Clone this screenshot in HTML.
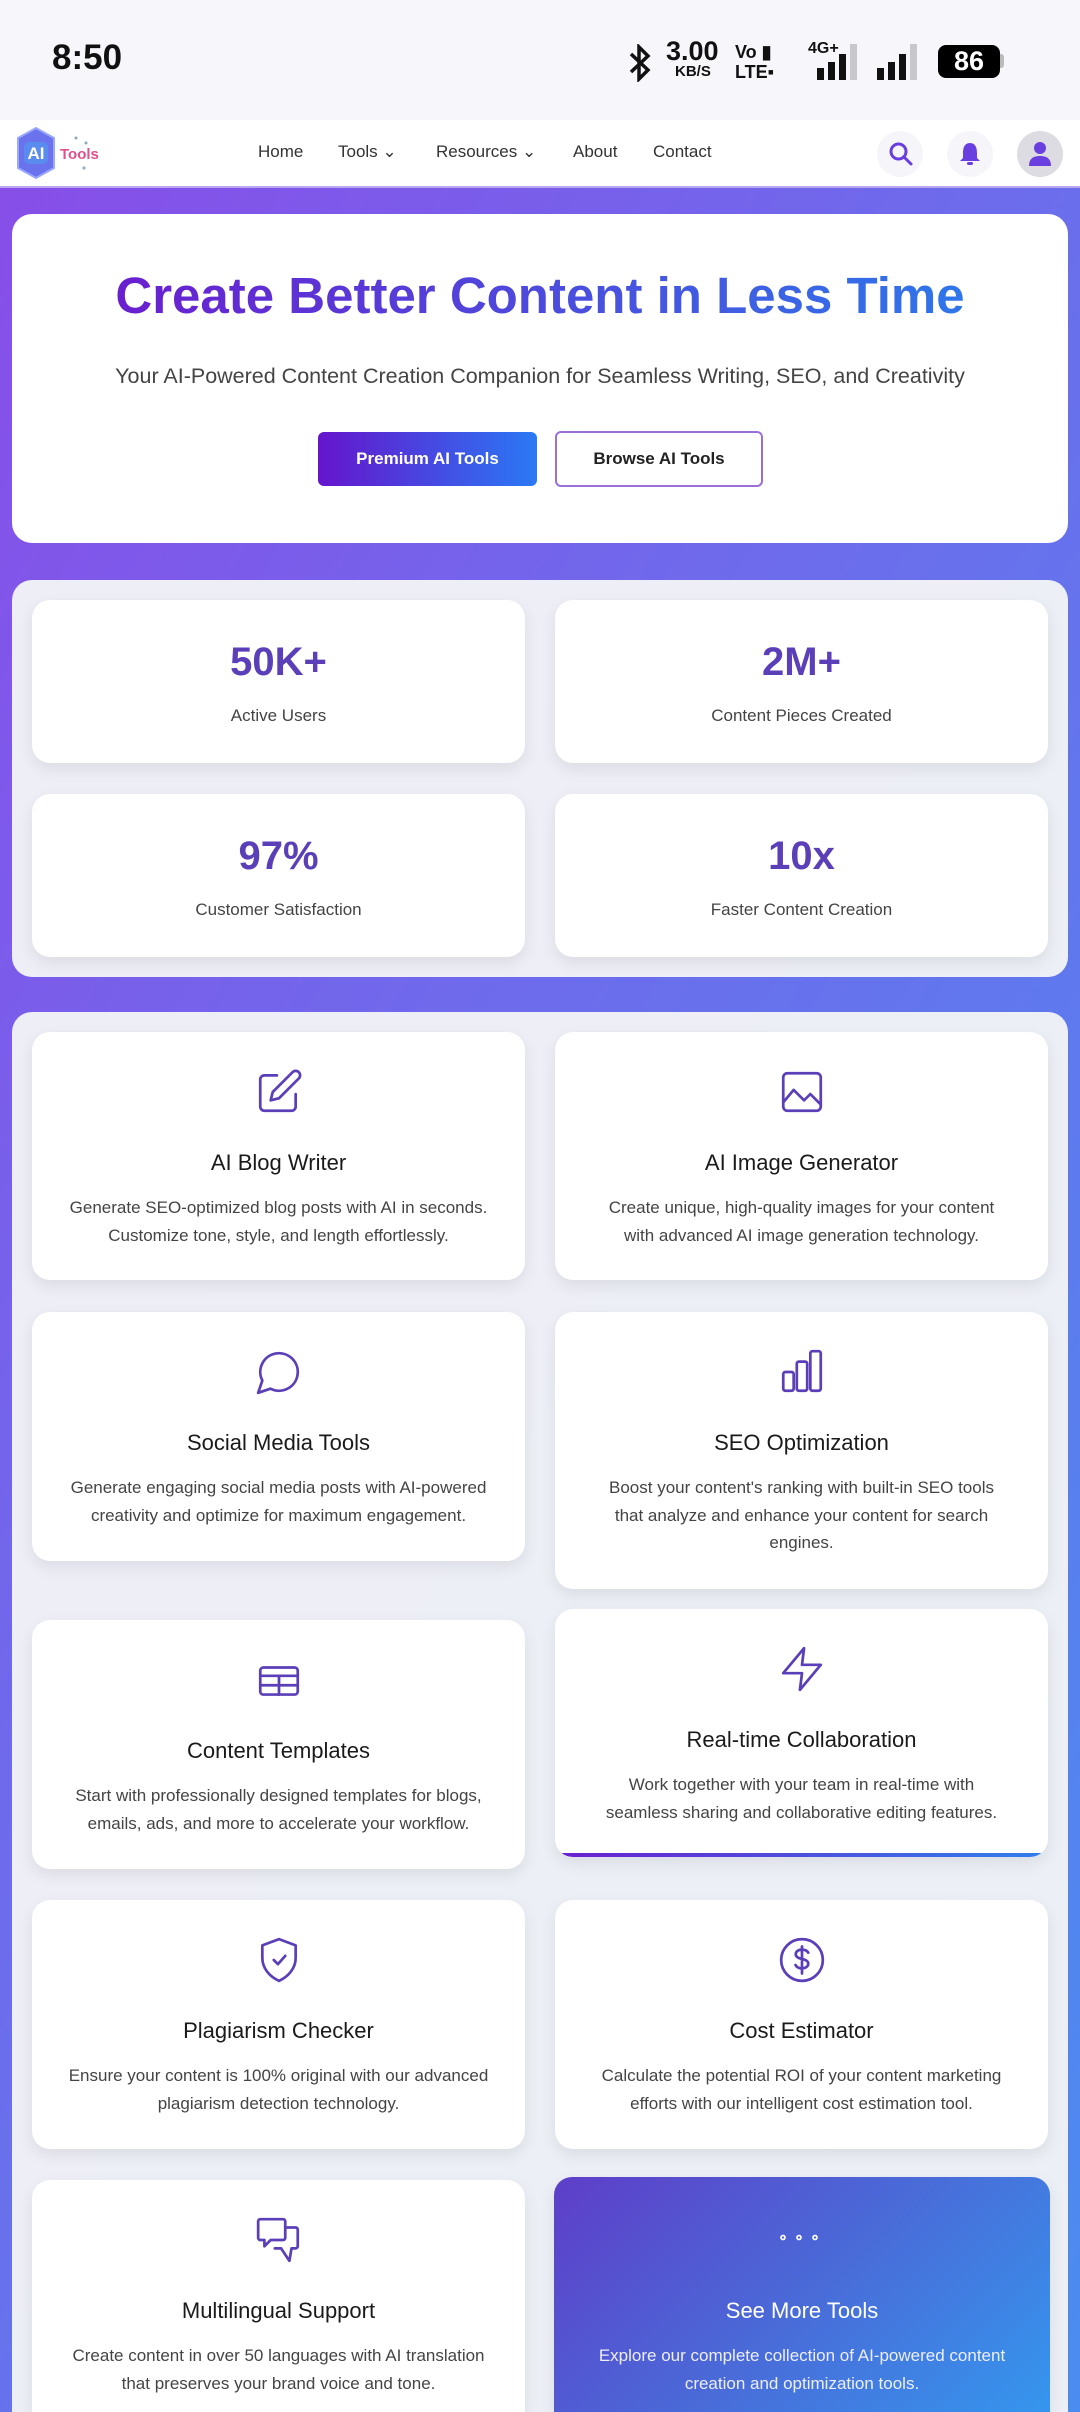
<!DOCTYPE html>
<html style="width:1080px;height:2412px;overflow:hidden"><head><meta charset="utf-8"><style>
*{box-sizing:border-box;margin:0;padding:0}
body{width:1080px;height:2412px;overflow:hidden;position:relative;font-family:"Liberation Sans",sans-serif;background:linear-gradient(120deg,#8a4be8 0%,#6d6cec 45%,#4b8cf0 100%)}
.abs{position:absolute}
.sb{left:0;top:0;width:1080px;height:120px;background:#f7f7fb}
.nav{left:0;top:120px;width:1080px;height:68px;background:#fff;border-bottom:2px solid #b9a6f0}
.nav .m{position:absolute;top:22px;font-size:17px;color:#333}
.circ{position:absolute;width:46px;height:46px;border-radius:50%;background:#f6f6fa;top:131px}
.panel{background:rgba(242,243,246,.97);border-radius:20px}
.card{position:absolute;background:#fff;border-radius:18px;box-shadow:0 6px 16px rgba(0,0,0,.08);text-align:center}
.sc .n{position:absolute;left:0;right:0;top:40px;font-size:40px;font-weight:bold;color:#5b3fb8}
.sc .l{position:absolute;left:0;right:0;top:106px;font-size:17px;color:#444}
.tc svg{position:absolute;left:222px;top:35px}
.tc .t{position:absolute;left:0;right:0;top:116px;font-size:22px;color:#1a1a1a;line-height:30px}
.tc .d{position:absolute;left:8px;right:8px;top:162px;font-size:17px;color:#444;line-height:27.5px;white-space:nowrap}
</style></head><body>
<div class="abs sb"></div>
<div class="abs" style="left:52px;top:38px;font-size:35px;font-weight:bold;color:#111">8:50</div>
<svg class="abs" style="left:628px;top:44px" width="24" height="38" viewBox="0 0 24 38"><path d="M3 10 L20 26 L11 35 V3 L20 12 L3 28" fill="none" stroke="#111" stroke-width="3.5"/></svg>
<div class="abs" style="left:666px;top:38px;font-size:27px;font-weight:bold;color:#111;line-height:26px">3.00</div>
<div class="abs" style="left:675px;top:63px;font-size:15px;font-weight:bold;color:#111">KB/S</div>
<div class="abs" style="left:735px;top:42px;font-size:18px;font-weight:bold;color:#111;line-height:20px">Vo ▮<br>LTE▪</div>
<div class="abs" style="left:808px;top:40px;font-size:16px;font-weight:bold;color:#111">4G+</div>
<svg class="abs" style="left:815px;top:44px" width="110" height="36"><rect x="2" y="24" width="7" height="12" fill="#111"/><rect x="13" y="18" width="7" height="18" fill="#111"/><rect x="24" y="10" width="7" height="26" fill="#111"/><rect x="35" y="0" width="7" height="36" fill="#c8c8cc"/><rect x="62" y="24" width="7" height="12" fill="#111"/><rect x="73" y="18" width="7" height="18" fill="#111"/><rect x="84" y="10" width="7" height="26" fill="#111"/><rect x="95" y="0" width="7" height="36" fill="#c8c8cc"/></svg>
<div class="abs" style="left:938px;top:45px;width:62px;height:33px;background:#000;border-radius:8px;color:#fff;font-size:27px;font-weight:bold;text-align:center;line-height:33px">86</div>
<div class="abs" style="left:1000px;top:54px;width:4px;height:14px;background:#bbb;border-radius:0 3px 3px 0"></div>

<div class="abs nav">
<svg style="position:absolute;left:14px;top:6px" width="86" height="56" viewBox="0 0 86 56"><polygon points="22,2 40,12 40,42 22,52 4,42 4,12" fill="#6a72ee" stroke="#9aa8ff" stroke-width="2"/><rect x="10" y="16" width="24" height="22" rx="5" fill="#5a8cf0"/><text x="22" y="33" font-size="17" font-weight="bold" fill="#fff" text-anchor="middle" font-family="Liberation Sans">AI</text><text x="46" y="33" font-size="15" font-weight="bold" fill="#e0508c" font-family="Liberation Sans">Tools</text><circle cx="62" cy="12" r="1.5" fill="#8ab"/><circle cx="72" cy="17" r="1.5" fill="#8ab"/><circle cx="70" cy="42" r="1.5" fill="#8ab"/></svg>
<div class="m" style="left:258px">Home</div>
<div class="m" style="left:338px">Tools ⌄</div>
<div class="m" style="left:436px">Resources ⌄</div>
<div class="m" style="left:573px">About</div>
<div class="m" style="left:653px">Contact</div>
</div>
<div class="circ" style="left:877px"></div>
<svg class="abs" style="left:888px;top:141px" width="26" height="26" viewBox="0 0 26 26"><circle cx="10.5" cy="10.5" r="7.5" fill="none" stroke="#6a3fe0" stroke-width="3"/><path d="M16 16 L23 23" stroke="#6a3fe0" stroke-width="3" stroke-linecap="round"/></svg>
<div class="circ" style="left:947px"></div>
<svg class="abs" style="left:958px;top:141px" width="24" height="26" viewBox="0 0 24 26"><path d="M12 2 C6 2 5 8 5 12 V17 L2 20 H22 L19 17 V12 C19 8 18 2 12 2Z" fill="#6a3fe0"/><rect x="9" y="21" width="6" height="3" rx="1.5" fill="#6a3fe0"/></svg>
<div class="circ" style="left:1017px;background:#dcdce2"></div>
<svg class="abs" style="left:1028px;top:140px" width="24" height="28" viewBox="0 0 24 28"><circle cx="12" cy="8" r="6" fill="#6a3fe0"/><path d="M1 26 C1 18 6 16 12 16 C18 16 23 18 23 26Z" fill="#6a3fe0"/></svg>

<div class="abs" style="left:12px;top:214px;width:1056px;height:329px;background:#fff;border-radius:20px"></div>
<div class="abs" style="left:0;width:1080px;top:266px;text-align:center;font-size:51px;font-weight:bold"><span style="background:linear-gradient(90deg,#6a1fcf,#2f76ea);-webkit-background-clip:text;background-clip:text;color:transparent;padding:0 4px">Create Better Content in Less Time</span></div>
<div class="abs" style="left:0;width:1080px;top:364px;text-align:center;font-size:21.5px;color:#444">Your AI-Powered Content Creation Companion for Seamless Writing, SEO, and Creativity</div>
<div class="abs" style="left:318px;top:432px;width:219px;height:54px;border-radius:6px;background:linear-gradient(90deg,#6515cc,#2a79f5);color:#fff;font-size:17px;font-weight:bold;text-align:center;line-height:54px">Premium AI Tools</div>
<div class="abs" style="left:555px;top:431px;width:208px;height:56px;border-radius:6px;border:2px solid #9b6fd8;background:#fff;color:#222;font-size:17px;font-weight:bold;text-align:center;line-height:52px">Browse AI Tools</div>

<div class="abs panel" style="left:12px;top:580px;width:1056px;height:397px"></div>
<div class="card sc" style="left:32px;top:600px;width:493px;height:163px"><div class="n">50K+</div><div class="l">Active Users</div></div>
<div class="card sc" style="left:555px;top:600px;width:493px;height:163px"><div class="n">2M+</div><div class="l">Content Pieces Created</div></div>
<div class="card sc" style="left:32px;top:794px;width:493px;height:163px"><div class="n">97%</div><div class="l">Customer Satisfaction</div></div>
<div class="card sc" style="left:555px;top:794px;width:493px;height:163px"><div class="n">10x</div><div class="l">Faster Content Creation</div></div>

<div class="abs panel" style="left:12px;top:1012px;width:1056px;height:1400px;border-radius:20px 20px 0 0"></div>

<div class="card tc" style="left:32px;top:1032px;width:493px;height:248px"><svg width="50" height="50" viewBox="0 0 24 24" fill="none" stroke="#5b3fb8" stroke-width="1.3" stroke-linecap="round" stroke-linejoin="round"><path d="M11 4H5a2 2 0 0 0-2 2v13a2 2 0 0 0 2 2h13a2 2 0 0 0 2-2v-6"/><path d="M18.5 2.5a2.1 2.1 0 0 1 3 3L12 15l-4 1 1-4z"/></svg><div class="t">AI Blog Writer</div><div class="d">Generate SEO-optimized blog posts with AI in seconds.<br>Customize tone, style, and length effortlessly.</div></div>
<div class="card tc" style="left:555px;top:1032px;width:493px;height:248px"><svg width="50" height="50" viewBox="0 0 24 24" fill="none" stroke="#5b3fb8" stroke-width="1.3" stroke-linecap="round" stroke-linejoin="round"><rect x="3" y="3" width="18" height="18" rx="2"/><path d="M3 17l5-6 5 5 3-3 5 5"/></svg><div class="t">AI Image Generator</div><div class="d">Create unique, high-quality images for your content<br>with advanced AI image generation technology.</div></div>

<div class="card tc" style="left:32px;top:1312px;width:493px;height:249px"><svg width="50" height="50" viewBox="0 0 24 24" fill="none" stroke="#5b3fb8" stroke-width="1.3" stroke-linecap="round" stroke-linejoin="round"><path d="M7.9 20A9 9 0 1 0 4 16.1L2 22Z"/></svg><div class="t">Social Media Tools</div><div class="d">Generate engaging social media posts with AI-powered<br>creativity and optimize for maximum engagement.</div></div>
<div class="card tc" style="left:555px;top:1312px;width:493px;height:277px"><svg width="50" height="50" viewBox="0 0 24 24" fill="none" stroke="#5b3fb8" stroke-width="1.3" stroke-linecap="round" stroke-linejoin="round"><rect x="3" y="12" width="5" height="9" rx="1"/><rect x="9.5" y="7" width="5" height="14" rx="1"/><rect x="16" y="2" width="5" height="19" rx="1"/></svg><div class="t">SEO Optimization</div><div class="d">Boost your content's ranking with built-in SEO tools<br>that analyze and enhance your content for search<br>engines.</div></div>

<div class="card tc" style="left:32px;top:1620px;width:493px;height:249px"><svg width="50" height="50" viewBox="0 0 24 24" fill="none" stroke="#5b3fb8" stroke-width="1.3" stroke-linecap="round" stroke-linejoin="round"><rect x="3" y="6" width="18" height="13" rx="1.5"/><path d="M3 10h18M3 14.5h18M12 10v9"/></svg><div class="t">Content Templates</div><div class="d">Start with professionally designed templates for blogs,<br>emails, ads, and more to accelerate your workflow.</div></div>
<div class="card tc" style="left:555px;top:1609px;width:493px;height:248px;overflow:hidden"><svg width="50" height="50" viewBox="0 0 24 24" fill="none" stroke="#5b3fb8" stroke-width="1.3" stroke-linecap="round" stroke-linejoin="round"><path d="M13 2 3 14h9l-1 8 10-12h-9z"/></svg><div class="t">Real-time Collaboration</div><div class="d">Work together with your team in real-time with<br>seamless sharing and collaborative editing features.</div><div style="position:absolute;left:0;right:0;bottom:0;height:4px;background:linear-gradient(90deg,#6a1fcf,#2f80ee)"></div></div>

<div class="card tc" style="left:32px;top:1900px;width:493px;height:249px"><svg width="50" height="50" viewBox="0 0 24 24" fill="none" stroke="#5b3fb8" stroke-width="1.3" stroke-linecap="round" stroke-linejoin="round"><path d="M12 2l8 3v6c0 5-3.5 9-8 11-4.5-2-8-6-8-11V5z"/><path d="M9.5 12l2 2 3.5-4"/></svg><div class="t">Plagiarism Checker</div><div class="d">Ensure your content is 100% original with our advanced<br>plagiarism detection technology.</div></div>
<div class="card tc" style="left:555px;top:1900px;width:493px;height:249px"><svg width="50" height="50" viewBox="0 0 24 24" fill="none" stroke="#5b3fb8" stroke-width="1.3" stroke-linecap="round" stroke-linejoin="round"><circle cx="12" cy="12" r="10"/><path d="M15 8.5c-.5-1-1.6-1.5-3-1.5-1.7 0-3 .9-3 2.2 0 3 6 1.6 6 4.6 0 1.3-1.3 2.2-3 2.2-1.5 0-2.6-.6-3.1-1.6M12 5.5v13"/></svg><div class="t">Cost Estimator</div><div class="d">Calculate the potential ROI of your content marketing<br>efforts with our intelligent cost estimation tool.</div></div>

<div class="card tc" style="left:32px;top:2180px;width:493px;height:232px;border-radius:18px 18px 0 0"><svg width="50" height="50" viewBox="0 0 24 24" fill="none" stroke="#5b3fb8" stroke-width="1.3" stroke-linecap="round" stroke-linejoin="round"><path d="M3 2h11a1 1 0 0 1 1 1v8a1 1 0 0 1-1 1H8l-3 3v-3H3a1 1 0 0 1-1-1V3a1 1 0 0 1 1-1z"/><path d="M16 6h4a1 1 0 0 1 1 1v8a1 1 0 0 1-1 1h-2l-1 6-4-6h-3"/></svg><div class="t">Multilingual Support</div><div class="d">Create content in over 50 languages with AI translation<br>that preserves your brand voice and tone.</div></div>
<div class="card tc" style="left:554px;top:2177px;width:496px;height:235px;border-radius:18px 18px 0 0;background:linear-gradient(135deg,#5e3ec8 0%,#4a6ad8 50%,#3596ee 100%)"><div style="position:absolute;left:0;right:0;top:50px;color:#fff;font-size:16px;letter-spacing:6px;font-weight:bold">∘∘∘</div><div class="t" style="color:#fff;top:119px">See More Tools</div><div class="d" style="color:#eef;top:165px">Explore our complete collection of AI-powered content<br>creation and optimization tools.</div></div>
</body></html>
